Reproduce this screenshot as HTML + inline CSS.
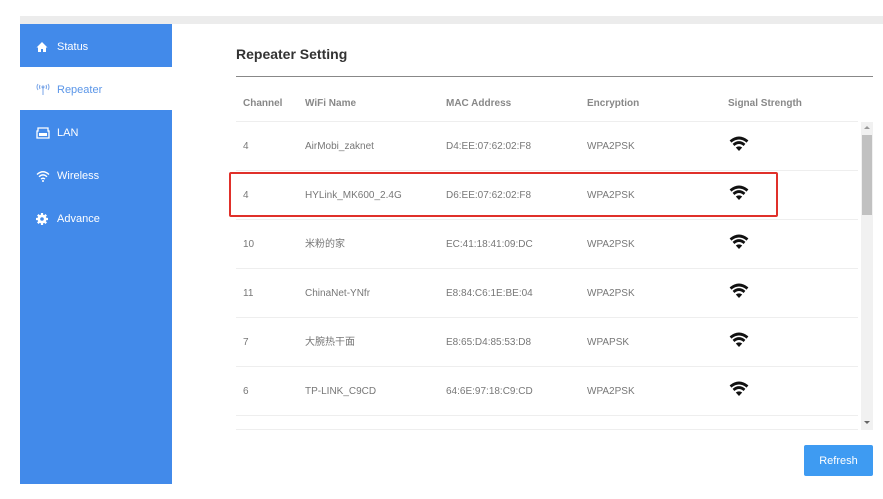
<!DOCTYPE html>
<html><head><meta charset="utf-8"><style>
*{margin:0;padding:0;box-sizing:border-box}
body{width:883px;height:499px;background:#fff;font-family:"Liberation Sans","Noto Sans CJK SC",sans-serif;position:relative;overflow:hidden}
.top{position:absolute;left:20px;top:16px;width:863px;height:8px;background:#ececec}
.side{position:absolute;left:20px;top:24px;width:152px;height:460px;background:#428aea}
.item{position:absolute;left:0;width:152px;height:43px;color:#fff;font-size:11px;line-height:47px;padding-left:37px}
.item svg{position:absolute;left:16px;top:17px}
.sel{background:#fff;color:#5b96e8}
h1{position:absolute;left:236px;top:46px;font-size:14px;font-weight:bold;color:#333}
.hl{position:absolute;left:236px;top:76px;width:637px;height:1px;background:#888}
.c{position:absolute;font-size:10px;color:#777;white-space:nowrap;line-height:12px;margin-top:2px}
.th{color:#888;font-weight:bold}
.sep{position:absolute;left:236px;width:622px;height:1px;background:#eee}
.wifi{position:absolute;left:729px}
.red{position:absolute;left:229px;top:172px;width:549px;height:45px;border:2px solid #e0302a;border-radius:2px}
.sb{position:absolute;left:861px;top:122px;width:12px;height:308px;background:#f1f1f1}
.thumb{position:absolute;left:862px;top:135px;width:10px;height:80px;background:#c1c1c1}
.btn{position:absolute;left:804px;top:445px;width:69px;height:31px;background:#3e9bf2;color:#fff;font-size:11px;text-align:center;line-height:33px;border-radius:2px}
</style></head><body>
<div class="top"></div>
<div class="side">
 <div class="item" style="top:0"><svg width="12" height="12" viewBox="0 0 12 12"><path d="M6 1L0.5 6.5H2V11H5V8H7V11H10V6.5H11.5Z" fill="#fff"/></svg>Status</div>
 <div class="item sel" style="top:43px"><svg width="16" height="14" viewBox="0 0 16 14" style="left:15px;top:15px"><g fill="none" stroke="#7aa6e8" stroke-width="1"><path d="M3 2Q1 5 3 8M13 2Q15 5 13 8M5 3Q4 5 5 7M11 3Q12 5 11 7M8 5V13"/><circle cx="8" cy="5" r="1"/></g></svg>Repeater</div>
 <div class="item" style="top:86px"><svg width="14" height="12" viewBox="0 0 14 12"><path d="M2 1H12V4H13V11H1V4H2Z" fill="none" stroke="#fff" stroke-width="1.3"/><path d="M3 6H11V9H3Z" fill="#fff"/></svg>LAN</div>
 <div class="item" style="top:129px"><svg width="14" height="12" viewBox="0 0 14 12"><g fill="none" stroke="#fff" stroke-width="1.4"><path d="M1 4.5Q7 -1 13 4.5M3 6.8Q7 3 11 6.8M5 9Q7 7.5 9 9"/></g><circle cx="7" cy="11" r="1" fill="#fff"/></svg>Wireless</div>
 <div class="item" style="top:172px"><svg width="12" height="12" viewBox="0 0 12 12"><circle cx="6" cy="6" r="4.5" fill="#fff"/><path d="M6 0V12M0 6H12M1.8 1.8L10.2 10.2M10.2 1.8L1.8 10.2" stroke="#fff" stroke-width="2.2"/><circle cx="6" cy="6" r="1.8" fill="#428aea"/></svg>Advance</div>
</div>
<h1>Repeater Setting</h1>
<div class="hl"></div>
<div class="c th" style="left:243px;top:96px">Channel</div>
<div class="c th" style="left:305px;top:96px">WiFi Name</div>
<div class="c th" style="left:446px;top:96px">MAC Address</div>
<div class="c th" style="left:587px;top:96px">Encryption</div>
<div class="c th" style="left:728px;top:96px">Signal Strength</div>
<div class="sep" style="top:121px"></div>
<div class="sep" style="top:170px"></div>
<div class="sep" style="top:219px"></div>
<div class="sep" style="top:268px"></div>
<div class="sep" style="top:317px"></div>
<div class="sep" style="top:366px"></div>
<div class="sep" style="top:415px"></div>
<div class="sep" style="top:429px"></div>

<div class="c" style="left:243px;top:139px">4</div><div class="c" style="left:305px;top:139px">AirMobi_zaknet</div><div class="c" style="left:446px;top:139px">D4:EE:07:62:02:F8</div><div class="c" style="left:587px;top:139px">WPA2PSK</div>
<div class="c" style="left:243px;top:188px">4</div><div class="c" style="left:305px;top:188px">HYLink_MK600_2.4G</div><div class="c" style="left:446px;top:188px">D6:EE:07:62:02:F8</div><div class="c" style="left:587px;top:188px">WPA2PSK</div>
<div class="c" style="left:243px;top:237px">10</div><div class="c" style="left:305px;top:237px">米粉的家</div><div class="c" style="left:446px;top:237px">EC:41:18:41:09:DC</div><div class="c" style="left:587px;top:237px">WPA2PSK</div>
<div class="c" style="left:243px;top:286px">11</div><div class="c" style="left:305px;top:286px">ChinaNet-YNfr</div><div class="c" style="left:446px;top:286px">E8:84:C6:1E:BE:04</div><div class="c" style="left:587px;top:286px">WPA2PSK</div>
<div class="c" style="left:243px;top:335px">7</div><div class="c" style="left:305px;top:335px">大腕热干面</div><div class="c" style="left:446px;top:335px">E8:65:D4:85:53:D8</div><div class="c" style="left:587px;top:335px">WPAPSK</div>
<div class="c" style="left:243px;top:384px">6</div><div class="c" style="left:305px;top:384px">TP-LINK_C9CD</div><div class="c" style="left:446px;top:384px">64:6E:97:18:C9:CD</div><div class="c" style="left:587px;top:384px">WPA2PSK</div>

<svg width="0" height="0" style="position:absolute"><defs><symbol id="w" viewBox="0 0 20 16"><g fill="none" stroke="#111" stroke-width="2.8"><path d="M1.5 5.5Q10 -1.5 18.5 5.5M4.5 8.9Q10 4.3 15.5 8.9"/></g><path d="M6.8 11.5Q10 9.3 13.2 11.5L10 15Z" fill="#111"/></symbol></defs></svg>
<svg class="wifi" style="top:136px" width="20" height="16"><use href="#w"/></svg>
<svg class="wifi" style="top:185px" width="20" height="16"><use href="#w"/></svg>
<svg class="wifi" style="top:234px" width="20" height="16"><use href="#w"/></svg>
<svg class="wifi" style="top:283px" width="20" height="16"><use href="#w"/></svg>
<svg class="wifi" style="top:332px" width="20" height="16"><use href="#w"/></svg>
<svg class="wifi" style="top:381px" width="20" height="16"><use href="#w"/></svg>

<div class="red"></div>
<div class="sb"></div><div class="thumb"></div>
<div style="position:absolute;left:864px;top:126px;width:0;height:0;border-left:3px solid transparent;border-right:3px solid transparent;border-bottom:3px solid #999"></div>
<div style="position:absolute;left:864px;top:421px;width:0;height:0;border-left:3px solid transparent;border-right:3px solid transparent;border-top:3px solid #666"></div>
<div class="btn">Refresh</div>
</body></html>
